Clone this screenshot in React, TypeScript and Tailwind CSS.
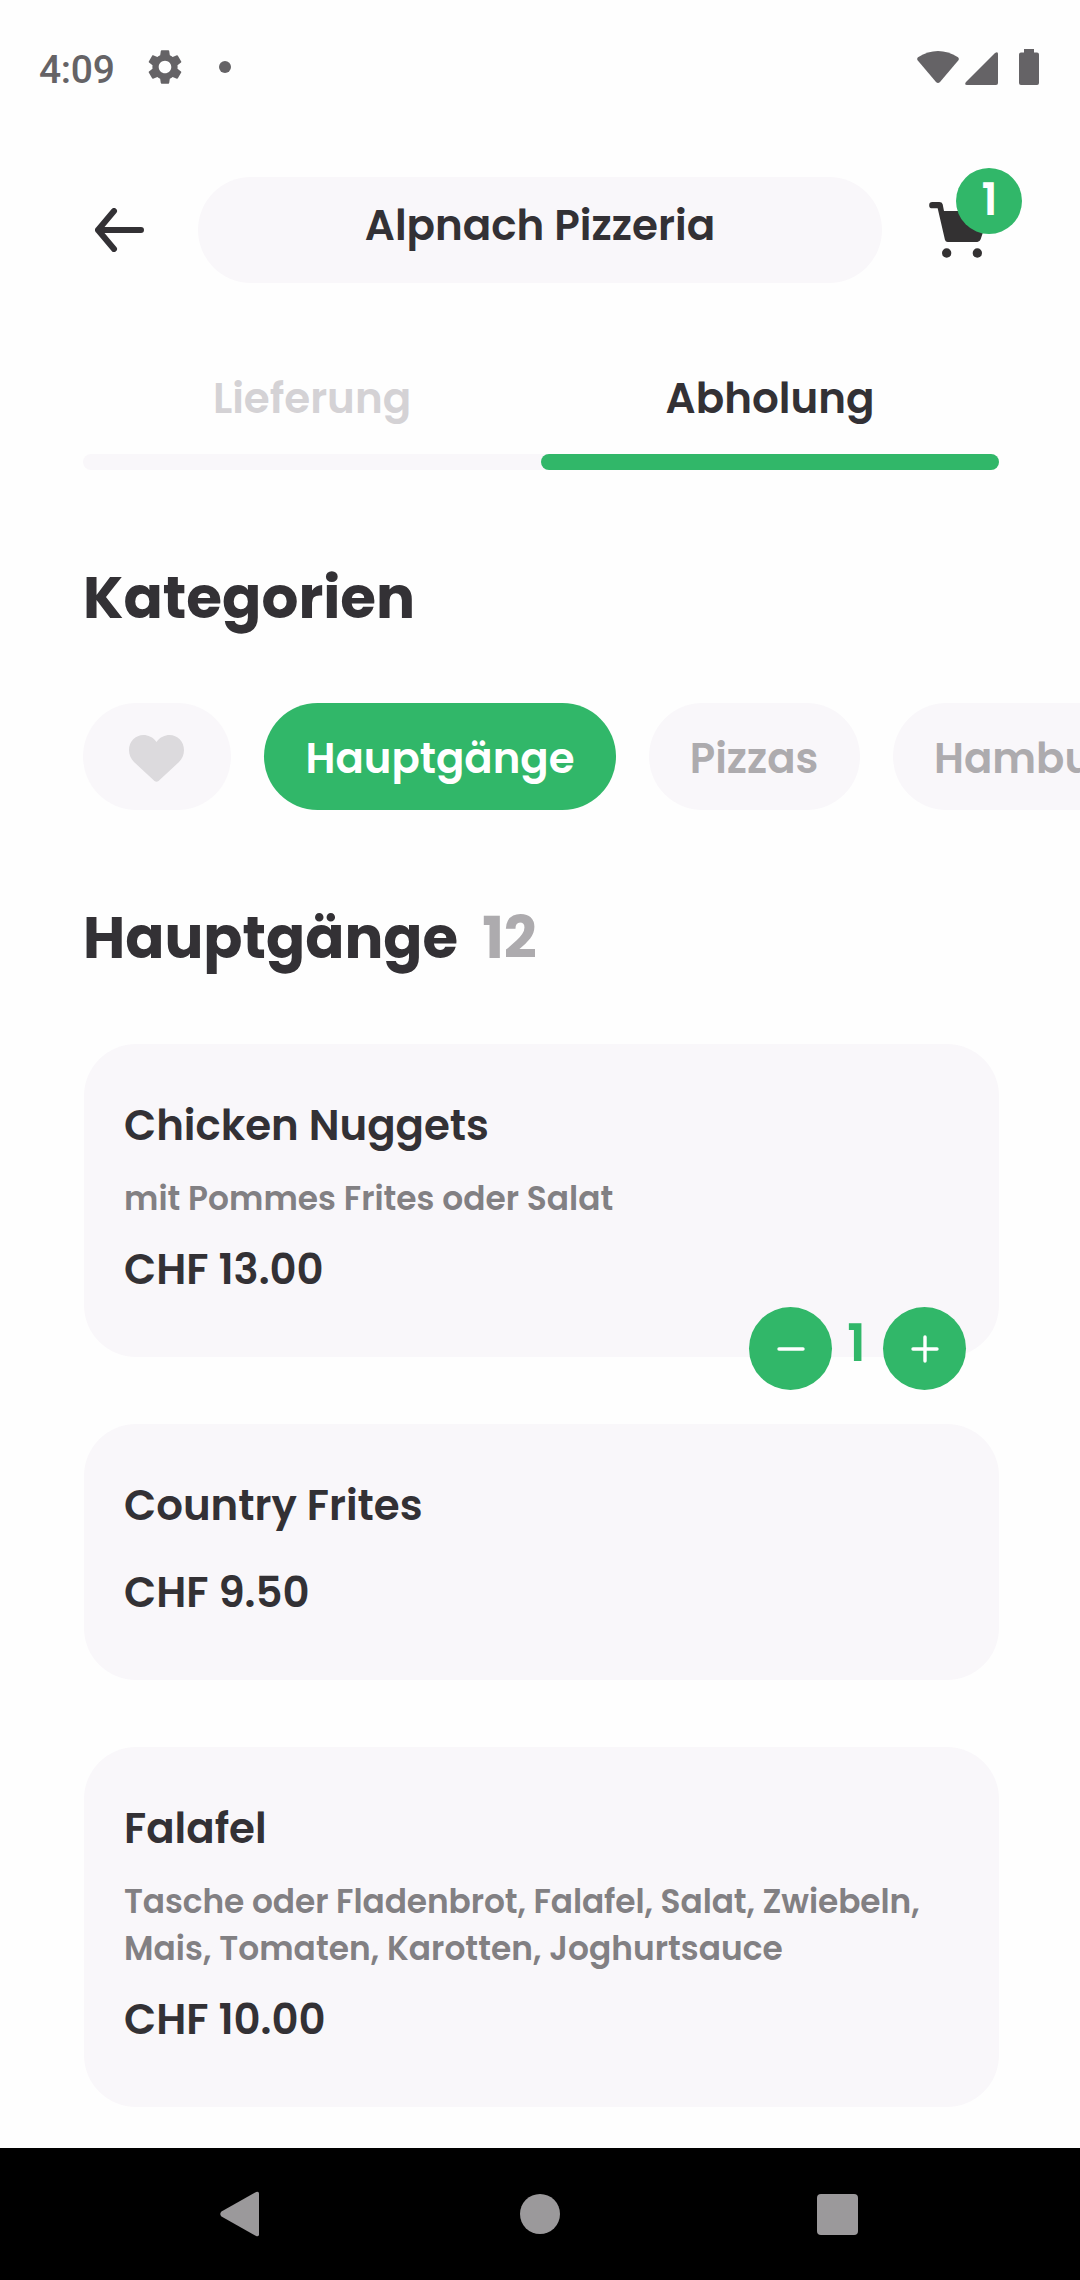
import React from 'react';
import { MdSettings } from 'react-icons/md';

interface MenuItem {
  name: string;
  lines?: { text: string; className: string }[];
  price: string;
  quantity?: number;
}

const menu: MenuItem[] = [
  {
    name: 'Chicken Nuggets',
    lines: [{ text: 'mit Pommes Frites oder Salat', className: 'tracking-[0.02px]' }],
    price: 'CHF 13.00',
    quantity: 1,
  },
  { name: 'Country Frites', price: 'CHF 9.50' },
  {
    name: 'Falafel',
    lines: [
      { text: 'Tasche oder Fladenbrot, Falafel, Salat, Zwiebeln,', className: 'tracking-[-0.07px]' },
      { text: 'Mais, Tomaten, Karotten, Joghurtsauce', className: 'tracking-[0.06px]' },
    ],
    price: 'CHF 10.00',
  },
];

const StatusBar = () => (
  <div className="flex h-[134px] items-center pr-[41px] pl-[39px] text-[#656366]">
    <span className="w-[105px] pt-[6px] font-['Roboto',sans-serif] text-[39px] leading-none font-medium tracking-[-0.3px]">4:09</span>
    <MdSettings className="size-[42px]" />
    <span className="ml-[33px] size-3 rounded-full bg-[#656366]" />
    <div className="ml-auto flex h-9 items-end">
      <svg width="42" height="33" viewBox="0 0 42 34" preserveAspectRatio="none" fill="currentColor" className="mb-px">
        <path d="M1 6.5Q11 0 21 0T41 6.5Q42.6 8 41 10L23 32Q21 34 19 32L1 10Q-.6 8 1 6.5Z" />
      </svg>
      <svg width="33" height="33" viewBox="0 0 33 33" fill="currentColor" className="ml-[6px]">
        <path d="M1 30L30 1Q33-1 33 2V31Q33 33 31 33H2Q-1 33 1 30Z" />
      </svg>
      <svg width="20" height="36" viewBox="0 0 20 36" fill="currentColor" className="ml-[21px]">
        <path d="M5 0H15V3.5H18Q20 3.5 20 5.5V34Q20 36 18 36H2Q0 36 0 34V5.5Q0 3.5 2 3.5H5Z" />
      </svg>
    </div>
  </div>
);

const Header = () => (
  <header className="mt-[43px] flex h-[106px] items-center pl-[83px]">
    <button className="w-[115px] pl-3">
      <svg width="50" height="44" viewBox="0 0 50 44" fill="none" stroke="currentColor" strokeWidth="6" strokeLinecap="round" strokeLinejoin="round">
        <path d="M46 22H3M19 3L3 22L19 41" />
      </svg>
    </button>
    <div className="flex h-full w-[684px] items-center justify-center rounded-full bg-[#f9f7fa] pb-[9px] text-[42px] font-semibold">
      Alpnach Pizzeria
    </div>
    <button className="relative ml-[47px]">
      <svg width="66" height="60" viewBox="57 150 198 180" fill="#333132">
        <path d="M67 156H88Q96 156 98 163L102 183H240L212 268Q209 276 202 276H113Q107 276 105 270L83 175H67A9.5 9.5 0 0 1 67 156Z" />
        <circle cx="110" cy="309" r="14" />
        <circle cx="202" cy="309" r="14" />
      </svg>
      <span className="absolute -top-8 left-[27px] flex size-[66px] items-center justify-center rounded-full bg-[#31b769] pb-[2px] pl-px text-[44px] leading-none font-semibold text-white">
        1
      </span>
    </button>
  </header>
);

const Tabs = () => (
  <div className="mt-[88px] grid grid-cols-2 pr-[81px] pl-[83px] text-center text-[42px] leading-[56px] font-semibold">
    <span className="text-[#d4d2d5]">Lieferung</span>
    <span>Abholung</span>
    <div className="col-span-2 mt-[27px] flex h-4 rounded-full bg-[#f9f7fa]">
      <div className="ml-auto w-1/2 rounded-full bg-[#31b769]" />
    </div>
  </div>
);

const Categories = () => (
  <div className="mt-[73px] flex h-[107px] gap-[33px] overflow-hidden pl-[83px] text-[41.8px] font-semibold text-[#adabae]">
    <button className="flex w-[148px] shrink-0 items-center justify-center rounded-full bg-[#f9f7fa] pt-1 pr-px">
      <svg width="55" height="47" viewBox="0 0 55 47" fill="#dcdadd">
        <path d="M27.5 7C24 2 19 0 14.5 0C6.5 0 0 6.5 0 15C0 20 2 24 5 27L25.5 46Q27.5 47.5 29.5 46L50 27C53 24 55 20 55 15C55 6.5 48.5 0 40.5 0C36 0 31 2 27.5 7Z" />
      </svg>
    </button>
    <button className="w-[352px] shrink-0 rounded-full bg-[#31b769] pt-[6px] text-white">Hauptgänge</button>
    <button className="w-[211px] shrink-0 rounded-full bg-[#f9f7fa] pt-[6px] pr-px">Pizzas</button>
    <button className="shrink-0 rounded-full bg-[#f9f7fa] px-[41px] pt-[6px]">Hamburger</button>
  </div>
);

const Stepper = ({ quantity }: { quantity: number }) => (
  <div className="absolute top-[263px] right-[33px] flex h-[83px] text-white">
    <button className="flex size-[83px] items-center justify-center rounded-full bg-[#31b769]">
      <svg width="28" height="28" viewBox="0 0 28 28" stroke="currentColor" strokeWidth="3.4" strokeLinecap="round">
        <path d="M2 14H26" />
      </svg>
    </button>
    <span className="flex w-[51px] items-center justify-center pr-[2px] pb-[11px] text-[52px] leading-none font-semibold text-[#31b769]">{quantity}</span>
    <button className="flex size-[83px] items-center justify-center rounded-full bg-[#31b769]">
      <svg width="28" height="28" viewBox="0 0 28 28" stroke="currentColor" strokeWidth="3.4" strokeLinecap="round">
        <path d="M2 14H26M14 2V26" />
      </svg>
    </button>
  </div>
);

const MenuCard = ({ name, lines, price, quantity }: MenuItem) => (
  <div className="relative rounded-[52px] bg-[#f9f7fa] px-10 pt-[53.5px] pb-[59.5px] text-[41.9px] leading-[56px] font-semibold">
    <h3>{name}</h3>
    {lines ? (
      <div className="mt-[21px] mb-5 text-[32.8px] leading-[47px] text-[#828083]">
        {lines.map((line) => (
          <p key={line.text} className={line.className}>{line.text}</p>
        ))}
      </div>
    ) : (
      <div className="h-[31px]" />
    )}
    <p>{price}</p>
    {quantity && <Stepper quantity={quantity} />}
  </div>
);

const NavBar = () => (
  <nav className="flex h-[132px] items-center bg-black pl-[220px] text-[#9b999b]">
    <svg width="39" height="46" viewBox="0 0 40 46" fill="currentColor">
      <path d="M1.5 20.5L37 .5Q40-.5 40 2V44Q40 46.5 37 45.5L1.5 25.5Q-1 23 1.5 20.5Z" />
    </svg>
    <span className="ml-[261px] size-10 rounded-full bg-[#9b999b]" />
    <span className="ml-[257px] size-[41px] rounded-[4px] bg-[#9b999b]" />
  </nav>
);

export default function App() {
  return (
    <div className="flex h-[2280px] w-[1080px] flex-col overflow-hidden bg-[#fefefe] font-['Poppins','Inter',sans-serif] text-[#333135]">
      <StatusBar />
      <Header />
      <Tabs />
      <h2 className="mt-24 pl-[83px] text-[58px] leading-[64px] font-bold">Kategorien</h2>
      <Categories />
      <h2 className="mt-24 flex gap-[24px] pl-[83px] text-[57.75px] leading-[64px] font-bold">
        <span>Hauptgänge</span>
        <span className="text-[#adabae]">12</span>
      </h2>
      <div className="mt-[74px] flex flex-1 flex-col gap-[67px] pr-[81px] pl-[84px]">
        {menu.map((item) => (
          <MenuCard key={item.name} {...item} />
        ))}
      </div>
      <NavBar />
    </div>
  );
}
